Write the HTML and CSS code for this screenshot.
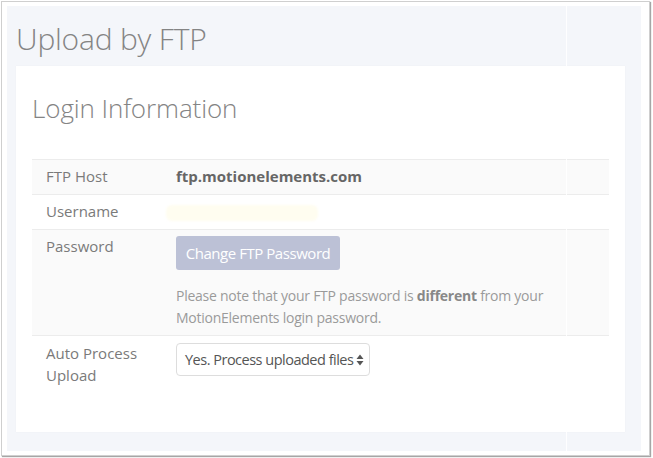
FILE: index.html
```html
<!DOCTYPE html>
<html>
<head>
<meta charset="utf-8">
<link rel="stylesheet" href="styles.css">
</head>
<body>
<div class="frame">
  <div class="page">
    <div class="col-line"></div>
    <h1 class="title">Upload by FTP</h1>
    <div class="card">
      <h2 class="subtitle">Login Information</h2>
      <table class="info">
        <tr class="striped">
          <td class="label">FTP Host</td>
          <td class="value"><strong class="host">ftp.motionelements.com</strong></td>
        </tr>
        <tr>
          <td class="label">Username</td>
          <td class="value"><span class="redacted"></span></td>
        </tr>
        <tr class="striped pw">
          <td class="label">Password</td>
          <td class="value">
            <button class="btn">Change FTP Password</button>
            <p class="note">Please note that your FTP password is <b>different</b> from your MotionElements login password.</p>
          </td>
        </tr>
        <tr class="last">
          <td class="label tall">Auto Process Upload</td>
          <td class="value">
            <div class="select">
              <span class="sel-text">Yes. Process uploaded files</span>
              <svg class="arrows" width="8" height="12" viewBox="0 0 8 12"><path d="M4 0.5 L7.5 5 L0.5 5 Z M4 11.5 L7.5 7 L0.5 7 Z" fill="#555"/></svg>
            </div>
          </td>
        </tr>
      </table>
    </div>
  </div>
</div>
</body>
</html>
```
FILE: styles.css
```css
html, body {
  margin: 0;
  padding: 0;
  background: #ffffff;
}
body {
  font-family: "Open Sans", "Liberation Sans", sans-serif;
  width: 653px;
  height: 458px;
  overflow: hidden;
}
.frame {
  margin: 1px 0 0 1px;
  border: 1px solid #cfcfcf;
  box-shadow: 1px 1px 1px rgba(0, 0, 0, 0.35);
  background: #ffffff;
  padding: 4px 8px 4px 5px;
  box-sizing: border-box;
  width: 649px;
  height: 455px;
}
.page {
  position: relative;
  background: #f4f6fa;
  height: 445px;
  padding: 0 16px 0 9px;
  box-sizing: border-box;
  display: flex;
  flex-direction: column;
}
.col-line {
  position: absolute;
  left: 559px;
  top: 0;
  width: 1px;
  height: 100%;
  background: rgba(255, 255, 255, 0.9);
  z-index: 2;
  pointer-events: none;
}
.title {
  margin: 0;
  padding-top: 16px;
  height: 44px;
  box-sizing: border-box;
  font-size: 30px;
  line-height: 33px;
  font-weight: 300;
  color: #848484;
  letter-spacing: -0.2px;
}
.card {
  margin-top: 16px;
  background: #ffffff;
  height: 366px;
  padding: 28px 16px 0 16px;
  box-sizing: border-box;
  box-shadow: 0 0 1px rgba(0, 0, 0, 0.06);
}
.subtitle {
  margin: 0 0 36px 0;
  font-size: 26px;
  line-height: 29px;
  font-weight: 300;
  color: #848484;
  letter-spacing: -0.1px;
}
.info {
  width: 100%;
  border-collapse: collapse;
  font-size: 15px;
  color: #7a7a7a;
}
.info tr {
  border-top: 1px solid #ececec;
}
.info tr.striped {
  background: #fafafa;
}
.info td {
  padding: 6px 14px 7px 14px;
  line-height: 21px;
  vertical-align: top;
}
.info td.label {
  width: 116px;
}
.info td.value {
  padding-left: 0;
}
.info td.tall {
  line-height: 22px;
}
.info tr.pw td {
  padding-bottom: 6px;
}
.host {
  color: #666;
  font-weight: 700;
}
.redacted {
  display: inline-block;
  margin-left: -10px;
  width: 152px;
  height: 16px;
  vertical-align: middle;
  background: #fffdf0;
  border-radius: 6px;
  filter: blur(1px);
}
.btn {
  display: block;
  font-family: inherit;
  font-size: 15px;
  line-height: 20px;
  color: #ffffff;
  background: #bcc1d6;
  border: none;
  border-radius: 3px;
  padding: 7px 0;
  height: 34px;
  width: 164px;
  text-align: center;
  white-space: nowrap;
  letter-spacing: -0.45px;
}
.note {
  margin: 15px 0 0 0;
  width: 380px;
  font-size: 14px;
  line-height: 22px;
  color: #9a9a9a;
  letter-spacing: -0.25px;
}
.note b {
  color: #888;
  font-weight: 700;
}
.select {
  margin-top: 1px;
  width: 194px;
  height: 33px;
  box-sizing: border-box;
  border: 1px solid #dddddd;
  border-radius: 4px;
  background: #ffffff;
  display: flex;
  align-items: center;
  gap: 3px;
  padding: 0 0 0 8px;
  color: #555;
  font-size: 14.5px;
}
.sel-text {
  white-space: nowrap;
  letter-spacing: -0.5px;
}
.arrows {
  flex: none;
}
```
